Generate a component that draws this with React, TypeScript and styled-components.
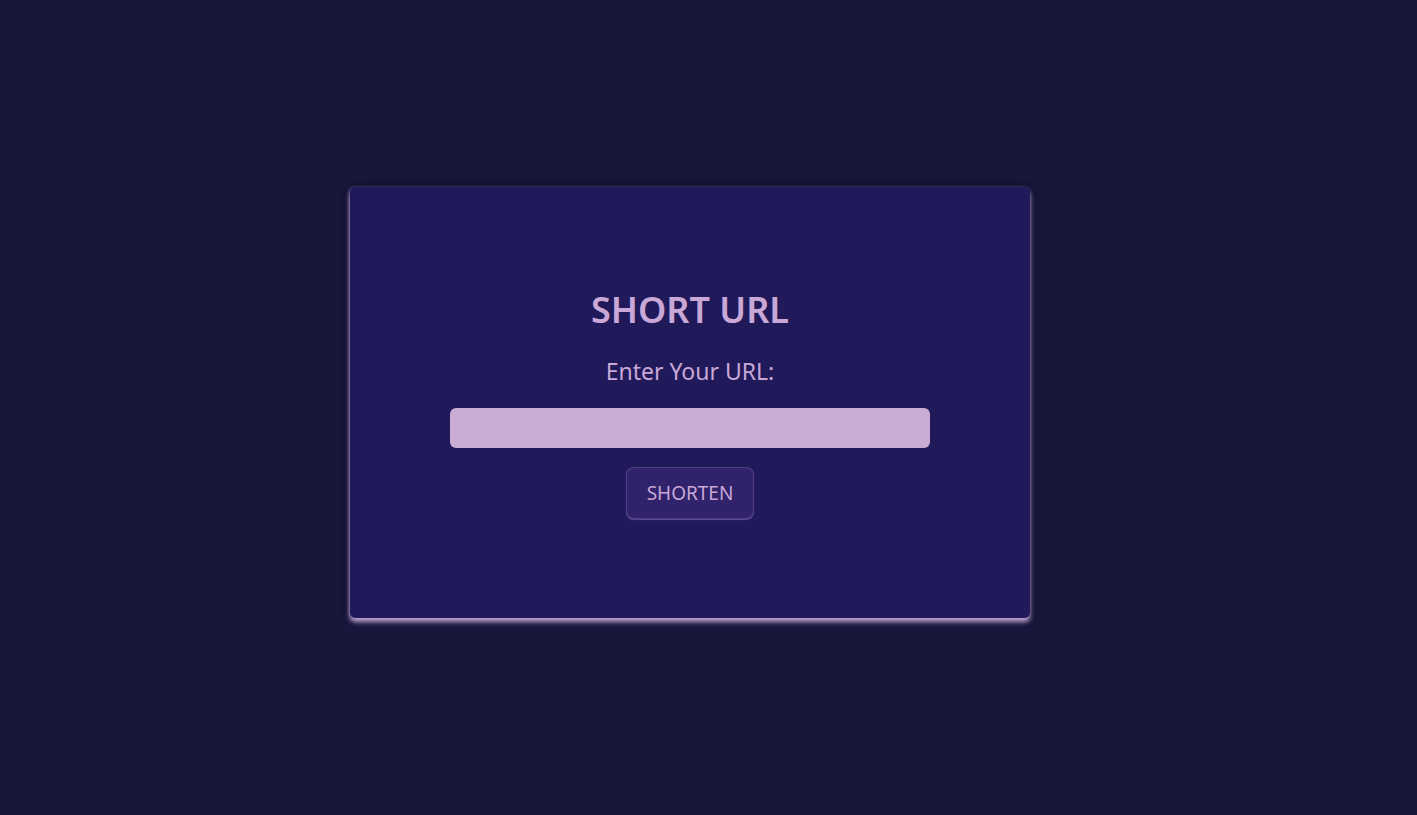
import React from "react";
import styled, { createGlobalStyle } from "styled-components";

const GlobalStyle = createGlobalStyle`
  html, body {
    margin: 0;
    padding: 0;
    background: #17163b;
    font-family: "Noto Sans", "Open Sans", sans-serif;
  }
`;

const Page = styled.main`
  min-height: 815px;
  display: flex;
  align-items: center;
  justify-content: center;
  box-sizing: border-box;
  padding-bottom: 10px;
  padding-right: 37px;
`;

const Card = styled.section`
  width: 680px;
  height: 431px;
  box-sizing: border-box;
  background: #211a5a;
  border-radius: 5px;
  box-shadow: 0 4px 5px rgba(210, 180, 230, 0.9), -1px 0 3px rgba(200, 170, 220, 0.35),
    0 0 8px rgba(10, 8, 30, 0.7);
  display: flex;
  flex-direction: column;
  align-items: center;
  justify-content: flex-start;
  padding-top: 101px;
`;

const Title = styled.h1`
  margin: 0;
  font-size: 36px;
  font-weight: 600;
  color: #c9a8d8;
  line-height: 1.2;
`;

const Label = styled.label`
  margin-top: 27px;
  font-size: 23px;
  color: #c9a8d8;
  line-height: 1.2;
`;

const Input = styled.input`
  margin-top: 22px;
  width: 480px;
  height: 40px;
  box-sizing: border-box;
  border: none;
  border-radius: 6px;
  background: #c9acd4;
  outline: none;
  padding: 0 12px;
  font-family: inherit;
  font-size: 16px;
`;

const Button = styled.button`
  margin-top: 19px;
  width: 128px;
  height: 52px;
  box-sizing: border-box;
  border: 1px solid rgba(120, 100, 170, 0.45);
  border-radius: 8px;
  background: #30226b;
  color: #c9a8d8;
  font-family: inherit;
  font-size: 19px;
  box-shadow: 0 1px 1px rgba(160, 130, 200, 0.5);
  cursor: pointer;
`;

export default function App() {
  return (
    <>
      <GlobalStyle />
      <Page>
        <Card>
          <Title>SHORT URL</Title>
          <Label htmlFor="url">Enter Your URL:</Label>
          <Input id="url" type="text" />
          <Button type="button">SHORTEN</Button>
        </Card>
      </Page>
    </>
  );
}
